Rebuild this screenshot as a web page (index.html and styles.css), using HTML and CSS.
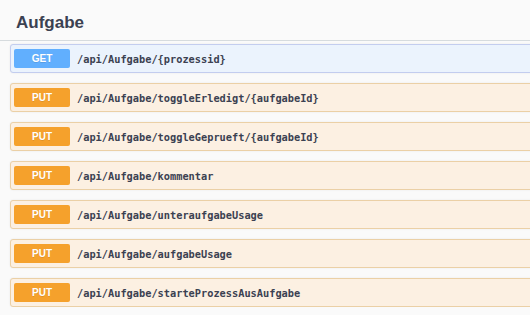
FILE: index.html
```html
<!DOCTYPE html>
<html lang="de">
<head>
	<meta charset="UTF-8"/>
	<title>Aufgabe</title>
	<link rel="stylesheet" href="styles.css">
</head>
<body>

<div class="tag">
	<h3 class="tag-title">Aufgabe</h3>
</div>

<div class="ops">
	<div class="op op-get"><span class="method">GET</span><span class="path">/api/Aufgabe/{prozessid}</span></div>
	<div class="op op-put"><span class="method">PUT</span><span class="path">/api/Aufgabe/toggleErledigt/{aufgabeId}</span></div>
	<div class="op op-put"><span class="method">PUT</span><span class="path">/api/Aufgabe/toggleGeprueft/{aufgabeId}</span></div>
	<div class="op op-put"><span class="method">PUT</span><span class="path">/api/Aufgabe/kommentar</span></div>
	<div class="op op-put"><span class="method">PUT</span><span class="path">/api/Aufgabe/unteraufgabeUsage</span></div>
	<div class="op op-put"><span class="method">PUT</span><span class="path">/api/Aufgabe/aufgabeUsage</span></div>
	<div class="op op-put"><span class="method">PUT</span><span class="path">/api/Aufgabe/starteProzessAusAufgabe</span></div>
</div>

</body>
</html>
```

FILE: styles.css
```css
	html {
		font-family: "Liberation Sans", Arial, sans-serif;
	}
	body {
		margin: 0;
		padding: 0;
		background: #fafafa;
		overflow: hidden;
	}
	.tag {
		padding: 13px 16px 7px;
		border-bottom: 1px solid #d6dbde;
	}
	.tag-title {
		margin: 0;
		font-size: 17px;
		line-height: 20px;
		font-weight: 700;
		color: #3b4151;
	}
	.ops {
		display: flex;
		flex-direction: column;
		gap: 10px;
		padding: 3px 0 0 10px;
		margin-right: -12px;
	}
	.op {
		display: flex;
		align-items: center;
		gap: 7px;
		height: 27px;
		padding: 0 3px;
		border: 1px solid;
		border-radius: 3px;
		box-shadow: 0 0 2px rgba(0 0 0 / .08);
	}
	.op-get {
		background: #ebf3fd;
		border-color: #c3cdef;
	}
	.op-put {
		background: #fcf0e2;
		border-color: #ebd0a6;
	}
	.method {
		width: 56px;
		height: 19px;
		line-height: 19px;
		text-align: center;
		border-radius: 2px;
		color: #fff;
		font-size: 10px;
		font-weight: 700;
		text-shadow: 0 1px 0 rgba(0 0 0 / .1);
	}
	.op-get .method {
		background: #61affe;
	}
	.op-put .method {
		background: #f5a12c;
	}
	.path {
		font-family: "DejaVu Sans Mono", monospace;
		font-size: 10.3px;
		font-weight: 700;
		color: #3b4151;
		white-space: nowrap;
	}
```
